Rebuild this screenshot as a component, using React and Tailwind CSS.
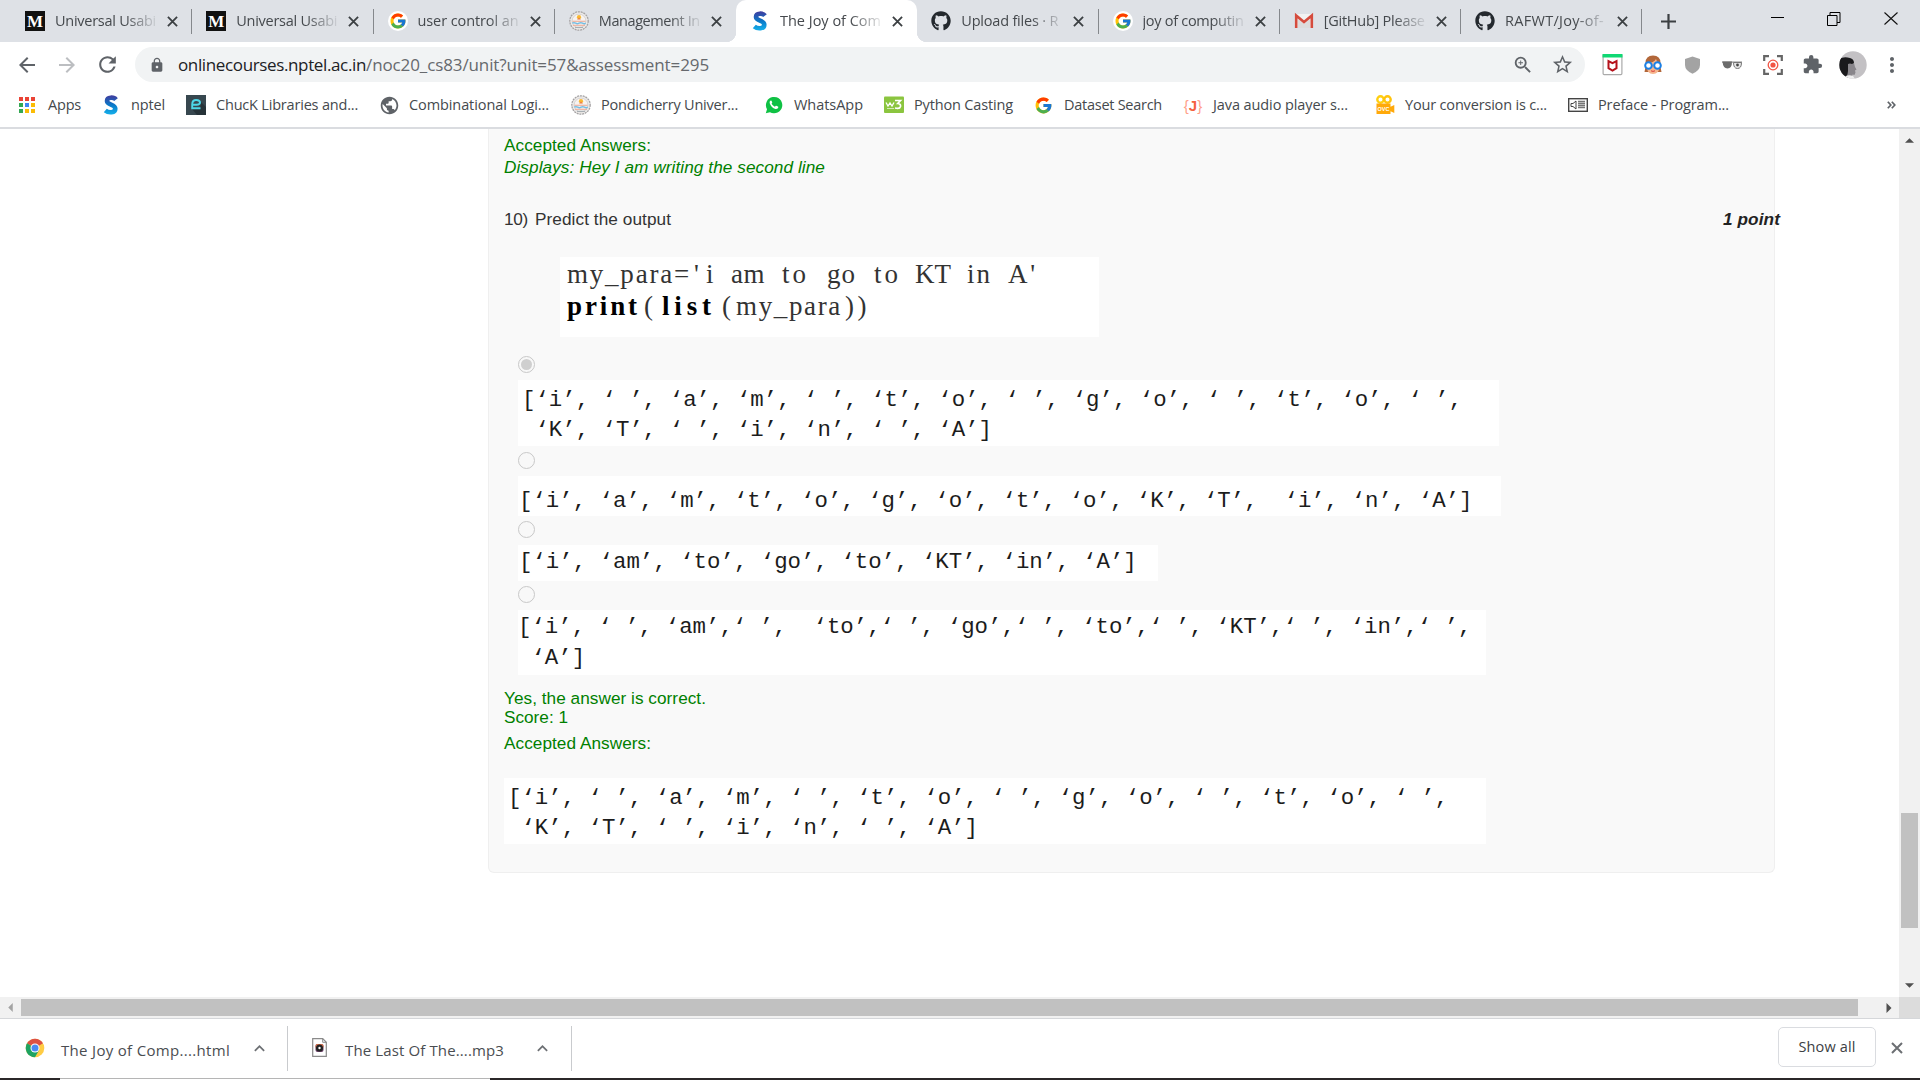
import React, { useLayoutEffect, useRef, useState } from "react";
import { FcGoogle } from "react-icons/fc";
import { FaGithub } from "react-icons/fa";
import {
  MdArrowBack, MdArrowForward, MdRefresh, MdLock, MdZoomIn, MdStarBorder,
  MdExtension, MdMoreVert, MdPublic, MdKeyboardArrowUp,
} from "react-icons/md";

/* One line of text whose tracking is adjusted so that it fills `w` pixels. */
function Fit({ w, children, className = "" }) {
  const ref = useRef(null);
  const [ls, setLs] = useState(0);
  useLayoutEffect(() => {
    const n = ref.current.getBoundingClientRect().width;
    setLs((w - n) / children.length);
  }, []);
  return (
    <span ref={ref} className={"inline-block shrink-0 whitespace-pre " + className} style={{ letterSpacing: ls + "px" }}>
      {children}
    </span>
  );
}

const Line = ({ className = "", ...rest }) => (
  <div className={"flex " + className}><Fit {...rest} /></div>
);

const Cross = ({ className, width }) => (
  <svg className={"shrink-0 " + className} viewBox="0 0 12 12" fill="none" stroke="currentColor" strokeWidth={width}>
    <path d="m1 1 10 10M11 1 1 11" />
  </svg>
);

const MediumIcon = () => (
  <span className="flex h-5 w-5 items-center justify-center bg-[#111] font-['Liberation_Serif',serif] text-[17px] font-bold leading-none text-white">M</span>
);
const GoogleTab = () => (
  <span className="flex h-5 w-5 items-center justify-center rounded-full bg-white"><FcGoogle size={18} /></span>
);
const Crest = () => (
  <svg className="h-5 w-5" viewBox="0 0 20 20">
    <circle cx="10" cy="10" r="9.2" fill="#eceae8" stroke="#a5a3a4" strokeWidth="1.3" strokeDasharray="2 0.8" />
    <circle cx="10" cy="10" r="6.9" fill="#f7f3f0" stroke="#c5c1c2" strokeWidth="0.6" />
    <circle cx="10" cy="6.2" r="2.1" fill="#f9b932" />
    <path d="M8 8.4 10 6.5l2 1.9z" fill="#ef7d45" />
    <path d="M3.5 10.3h13M4 14.2h12" stroke="#eba58f" strokeWidth="1.1" />
    <path d="M3.3 12.2q1.7-1 3.4 0t3.4 0 3.4 0 3.2 0" fill="none" stroke="#74bde3" strokeWidth="1.5" />
    <path d="M6 16.3h8" stroke="#9aa4ab" strokeWidth="1" />
  </svg>
);
const Swayam = () => (
  <svg className="h-5 w-5" viewBox="0 0 20 20">
    <defs>
      <linearGradient id="sg" x1="0" y1="0" x2="0" y2="20" gradientUnits="userSpaceOnUse">
        <stop offset="0.05" stopColor="#3e3fa0" /><stop offset="0.5" stopColor="#0a78c8" /><stop offset="0.9" stopColor="#13a9e6" />
      </linearGradient>
    </defs>
    <path d="M15 4.600C13 2 6 1.600 6 6c0 4 8.300 3.300 8.300 7.700 0 4.300-6.700 4.600-10 1.700" fill="none" stroke="url(#sg)" strokeWidth="4.600" />
  </svg>
);
const AppsIcon = () => (
  <span className="grid w-4 grid-cols-3 gap-[2px]">
    <i className="h-1 w-1 bg-[#ea4335]" /><i className="h-1 w-1 bg-[#ea4335]" /><i className="h-1 w-1 bg-[#ea4335]" />
    <i className="h-1 w-1 bg-[#34a853]" /><i className="h-1 w-1 bg-[#4285f4]" /><i className="h-1 w-1 bg-[#fbbc05]" />
    <i className="h-1 w-1 bg-[#34a853]" /><i className="h-1 w-1 bg-[#fbbc05]" /><i className="h-1 w-1 bg-[#fbbc05]" />
  </span>
);
const ChuckIcon = () => (
  <svg className="h-5 w-5" viewBox="0 0 20 20">
    <path d="M0 0h20v20H0z" fill="#37474f" />
    <path d="M6 14h8l1-7 5 5v8h-9z" fill="#263238" />
    <path d="M14.500 13.200H6.200V9.500q0-4.500 4-4.500 3.800 0 3.800 2.600 0 2.200-3.600 2.200H6.200" fill="none" stroke="#4dd6e8" strokeWidth="1.900" />
  </svg>
);
const WhatsApp = () => (
  <svg className="h-5 w-5" viewBox="0 0 20 20">
    <path d="M1.8 18.3 3 14.2A8.2 8.2 0 1 1 6 17.2z" fill="#0fc144" />
    <path d="M7 5.6c-.9.2-1.7 1.2-1.2 2.8.8 2.600 3 4.900 5.700 5.500 1.400.3 2.600-.4 2.800-1.600.1-.5 0-.6-.4-.8l-1.600-.8c-.3-.1-.5 0-.7.200l-.7.8c-1.600-.6-2.700-1.700-3.300-3.100l.6-.8c.1-.2.1-.4 0-.6l-.7-1.500z" fill="#fff" />
  </svg>
);
const W3 = () => (
  <svg className="h-5 w-5" viewBox="0 0 20 20">
    <rect y="1.500" width="20" height="16.500" rx="1" fill="#8bc53f" />
    <path d="M2 7.500 4 11 6 8l2 3L10 7.500" fill="none" stroke="#fff" strokeWidth="1.300" />
    <path d="M11 5.500h5.500l-2.800 3q3.300.3 2.800 3-.8 2.800-5.500 1.500" fill="none" stroke="#fff" strokeWidth="1.700" />
    <path d="M3 13.500h7" stroke="#d4eab4" strokeWidth="1" />
  </svg>
);
const JIcon = () => (
  <span className="flex h-5 w-5 items-center justify-center font-['Liberation_Sans',sans-serif] text-[15px] leading-none text-[#ff9f8a]">
    {"{"}<b className="text-[15px] text-[#f4623f]">J</b>{"}"}
  </span>
);
const Ovc = () => (
  <svg className="h-5 w-5" viewBox="0 0 20 20">
    <circle cx="5.500" cy="4.500" r="3.200" fill="none" stroke="#ffcf10" strokeWidth="2.400" />
    <circle cx="12.500" cy="4.500" r="3.200" fill="none" stroke="#ffc30d" strokeWidth="2.400" />
    <path d="M1.500 8.500h14v3.200l3.800-1.700v8l-3.800-1.700V19h-14z" fill="#ffa90a" />
    <text x="2.500" y="16" fontSize="5.500" fontWeight="bold" fill="#fff" fontFamily="Liberation Sans">OVC</text>
  </svg>
);
const Preface = () => (
  <svg className="h-5 w-5" viewBox="0 0 20 20">
    <rect x="0.700" y="3.700" width="18.600" height="12.600" fill="#fff" stroke="#444" strokeWidth="1.400" />
    <path d="M3 8.500h2L8 6v8l-3-2.500H3z" fill="none" stroke="#444" />
    <path d="M10 6.500h7M10 8.500h7M10 10.500h7M10 12.500h7" stroke="#777" strokeWidth="1.300" />
  </svg>
);

const tabs = [
  { icon: <MediumIcon />, t: "Universal Usabi", w: 101, sep: true },
  { icon: <MediumIcon />, t: "Universal Usabi", w: 101, sep: true },
  { icon: <GoogleTab />, t: "user control an", w: 101, sep: true },
  { icon: <Crest />, t: "Management In", w: 101 },
  { icon: <Swayam />, t: "The Joy of Com", w: 101, active: true },
  { icon: <FaGithub size={20} className="text-[#24292e]" />, t: "Upload files · R", w: 97, sep: true },
  { icon: <GoogleTab />, t: "joy of computin", w: 101, sep: true },
  {
    icon: (
      <svg className="h-5 w-5" viewBox="0 0 20 20">
        <path d="M1 3h18v14H1z" fill="#f2f2f2" />
        <path d="m4 8 6 5 6-5v9H4z" fill="#dcdcdc" />
        <path d="M2.200 17V4.500L10 11l7.800-6.500V17" fill="none" stroke="#d54b3d" strokeWidth="2.600" />
      </svg>
    ),
    t: "[GitHub] Please", w: 101, sep: true,
  },
  { icon: <FaGithub size={20} className="text-[#24292e]" />, t: "RAFWT/Joy-of-", w: 99, sep: true },
];

const bookmarks = [
  { x: "w-[29px]", m: "ml-[19px]", icon: <AppsIcon />, t: "Apps", w: 33 },
  { x: "w-[30px]", m: "ml-[20px]", icon: <Swayam />, t: "nptel", w: 34 },
  { x: "w-[30px]", m: "ml-[21px]", icon: <ChuckIcon />, t: "ChucK Libraries and...", w: 142 },
  { x: "w-[30px]", m: "ml-[21px]", icon: <MdPublic size={21} className="text-[#5f6368]" />, t: "Combinational Logi...", w: 140 },
  { x: "w-[30px]", m: "ml-[22px]", icon: <Crest />, t: "Pondicherry Univer...", w: 137 },
  { x: "w-[30px]", m: "ml-[26px]", icon: <WhatsApp />, t: "WhatsApp", w: 69 },
  { x: "w-[30px]", m: "ml-[21px]", icon: <W3 />, t: "Python Casting", w: 99 },
  { x: "w-[30px]", m: "ml-[21px]", icon: <FcGoogle size={19} />, t: "Dataset Search", w: 98 },
  { x: "w-[30px]", m: "ml-[21px]", icon: <JIcon />, t: "Java audio player s...", w: 135 },
  { x: "w-[30px]", m: "ml-[27px]", icon: <Ovc />, t: "Your conversion is c...", w: 142 },
  { x: "w-[30px]", m: "ml-[21px]", icon: <Preface />, t: "Preface - Program...", w: 131 },
];

function TabStrip() {
  return (
    <div className="flex h-[42px] items-stretch bg-[#dee1e6] pl-[11px]">
      {tabs.map((tab, i) => (
        <div
          key={i}
          className={"relative flex w-[181.250px] shrink-0 items-center pl-[14px] " + (tab.active ? "rounded-t-[10px] bg-white" : "")}
        >
          {tab.active && (
            <>
              <span className="absolute -left-[10px] bottom-0 h-[10px] w-[10px] bg-[radial-gradient(circle_at_0_0,#dee1e6_10px,white_10.5px)]" />
              <span className="absolute -right-[10px] bottom-0 h-[10px] w-[10px] bg-[radial-gradient(circle_at_100%_0,#dee1e6_10px,white_10.5px)]" />
            </>
          )}
          <span className="w-[30px] shrink-0">{tab.icon}</span>
          <span className="w-[103px] shrink-0 text-[#45494d] [mask-image:linear-gradient(to_right,black_68%,transparent_102%)]">
            <Fit w={tab.w} className="align-top text-[14.5px] leading-[24px]">{tab.t}</Fit>
          </span>
          <Cross className="ml-[9px] h-[11px] w-[11px] text-[#3c4043]" width={2} />
          {tab.sep && <span className="ml-auto h-[25px] w-px bg-[#85888c]" />}
        </div>
      ))}
      <svg className="ml-[19px] mt-[14px] h-[15px] w-[15px]" viewBox="0 0 15 15" stroke="#3c4043" strokeWidth="2.200">
        <path d="M7.500 0v15M0 7.500h15" />
      </svg>
      <div className="ml-auto mr-[22px] flex items-start">
        <span className="mr-[43px] mt-[17px] h-px w-[13px] bg-black" />
        <svg className="mr-[43px] mt-[12px] h-[14px] w-[14px]" viewBox="0 0 14 14" fill="none" stroke="#000">
          <path d="M.5 3.500h9.500v10H.5zM3 3.500V.5h10v10h-3" />
        </svg>
        <svg className="mt-[12px] h-[13px] w-[14px]" viewBox="0 0 14 13" stroke="#111" strokeWidth="1.100">
          <path d="m.5.5 13 12M13.500.5l-13 12" />
        </svg>
      </div>
    </div>
  );
}

function Extensions() {
  return (
    <div className="flex items-center">
      <svg className="ml-[17px] h-[22px] w-[21px]" viewBox="0 0 20 22">
        <rect x="0.600" y="0.600" width="18.800" height="20" rx="1" fill="#fff" stroke="#aaa" strokeWidth="1.200" />
        <path d="M0 0h20v3.500H0z" fill="#0fd873" />
        <path d="M6 7.200v7l4 2.300 4-2.300v-7l-4 2z" fill="none" stroke="#b5121b" strokeWidth="2" />
      </svg>
      <svg className="ml-[20px] h-5 w-5" viewBox="0 0 20 20">
        <path d="M1.500 17Q2.500 14 2.500 8q0-7.500 7.500-7.500T17.500 8q0 6 1 9z" fill="#b2673a" />
        <path d="M4 8q7 0 9-4 1 3.500 3.500 4v4q-.5 7-6.500 7T4 12z" fill="#f6b58c" />
        <circle cx="5.500" cy="10.500" r="3.300" fill="#fff" stroke="#1a80e6" strokeWidth="2" />
        <circle cx="14.500" cy="10.500" r="3.300" fill="#fff" stroke="#1a80e6" strokeWidth="2" />
        <path d="M8 15.800q2 1.200 4 0" stroke="#d93b3b" fill="none" />
      </svg>
      <svg className="ml-[21px] h-[18px] w-[17px]" viewBox="0 0 17 18">
        <path d="M8.500.500 16 3v6q0 5.500-7.500 8.700Q1 14.500 1 9V3z" fill="#a3a3a3" />
      </svg>
      <svg className="ml-[21px] h-[10px] w-[21px]" viewBox="0 0 21 10">
        <path d="M0 1.500h20v1.200H0z" fill="#8a8a8a" />
        <path d="M.5 1.500h9.500q0 7-4.500 7t-5-7z" fill="#6c6c6c" />
        <path d="M11.500 2.500h8q0 6-4 6t-4-6z" fill="#e4e4e4" stroke="#777" />
        <circle cx="15.500" cy="5" r="1.400" fill="#444" />
      </svg>
      <svg className="ml-[20px] h-5 w-5" viewBox="0 0 20 20" fill="none">
        <path d="M1.200 6V1.200H6M14 1.200h4.800V6M18.800 14v4.800H14M6 18.800H1.200V14" stroke="#666" strokeWidth="2.200" />
        <circle cx="10" cy="10" r="4.800" stroke="#f25545" strokeWidth="1.300" />
        <circle cx="10" cy="10" r="2.600" fill="#f25545" />
      </svg>
      <MdExtension size={21} className="ml-[19px] text-[#5f6368]" />
      <svg className="ml-[16px] h-7 w-7" viewBox="0 0 28 28">
        <defs><clipPath id="av"><circle cx="14" cy="14" r="13.700" /></clipPath></defs>
        <g clipPath="url(#av)">
          <path d="M0 0h28v28H0z" fill="#c3c1c4" />
          <path d="M0 8q5-3 11-1 4 1 4 5l-2 4-1 10H0z" fill="#1a1a1c" />
          <path d="M9 13q2-1 4 0l2-1 1 4 1.500 2.500-1.500 1 .5 2-1 2.500-2-.5-1 3.500H7q2-4 2-7z" fill="#89868b" />
          <path d="M5 26q4-3 9-1l2 3H4z" fill="#efefef" />
        </g>
      </svg>
      <MdMoreVert size={24} className="ml-[13px] text-[#5f6368]" />
    </div>
  );
}

function Toolbar() {
  return (
    <div className="flex h-[45px] items-center bg-white">
      <MdArrowBack size={24} className="ml-[15px] text-[#5f6368]" />
      <MdArrowForward size={24} className="ml-[16px] text-[#bcbec1]" />
      <MdRefresh size={25} className="ml-[16px] text-[#5f6368]" />
      <div className="ml-[15px] flex h-[35px] w-[1450px] items-center rounded-full bg-[#f1f3f4]">
        <MdLock size={16} className="ml-[14px] text-[#5f6368]" />
        <span className="ml-[13px] flex text-[17px] leading-[30px]">
          <Fit w={188} className="text-[#202124]">onlinecourses.nptel.ac.in</Fit>
          <Fit w={343} className="text-[#66696d]">/noc20_cs83/unit?unit=57&assessment=295</Fit>
        </span>
        <MdZoomIn size={22} className="ml-auto text-[#5f6368]" />
        <MdStarBorder size={23} className="ml-[17px] mr-[11px] text-[#5f6368]" />
      </div>
      <Extensions />
    </div>
  );
}

function Bookmarks() {
  return (
    <div className="flex h-[42px] items-center border-b-2 border-[#dadce0] bg-white pb-[4px] text-[14.500px] leading-[24px] text-[#45494d]">
      {bookmarks.map((b) => (
        <div key={b.t} className={"flex shrink-0 items-center " + b.m}>
          <span className={"shrink-0 " + b.x}>{b.icon}</span>
          <Fit w={b.w}>{b.t}</Fit>
        </div>
      ))}
      <svg className="ml-auto mr-[24px] h-2 w-[9px]" viewBox="0 0 9 8" fill="none" stroke="#5f6368" strokeWidth="1.700">
        <path d="m.8.700 3 3.300-3 3.300M4.800.700l3 3.300-3 3.300" />
      </svg>
    </div>
  );
}

function Radio({ on, className }) {
  return (
    <span className={"flex h-[17px] w-[17px] items-center justify-center rounded-full border border-[#c8c8c8] bg-[#f8f8f8] " + className}>
      {on && <span className="h-[11px] w-[11px] rounded-full bg-[#cfcfcf]" />}
    </span>
  );
}

const Mono = ({ children }) => <Line w={children.length * 13.43}>{children}</Line>;

const answerTop = "[‘i’, ‘ ’, ‘a’, ‘m’, ‘ ’, ‘t’, ‘o’, ‘ ’, ‘g’, ‘o’, ‘ ’, ‘t’, ‘o’, ‘ ’,";
const answerBottom = " ‘K’, ‘T’, ‘ ’, ‘i’, ‘n’, ‘ ’, ‘A’]";
const monoBox = "bg-white font-['Liberation_Mono',monospace] text-[22.400px] leading-[30px] text-[#1c1c1c] ";

function Question() {
  return (
    <div className="h-[744px] w-[1287px] rounded-b-[6px] border border-t-0 border-[#efefef] bg-[#f9f9f9] pl-[15px] font-['Liberation_Sans',Arial,sans-serif] text-[17.200px] text-[#333]">
      <div className="pt-[5px] leading-[22px] text-[#008000]">
        <Line w={147}>Accepted Answers:</Line>
        <Line w={321} className="italic">Displays: Hey I am writing the second line</Line>
      </div>
      <div className="-mr-[6px] mt-[30px] flex leading-[22px]">
        <Fit w={24}>10)</Fit>
        <Fit w={136} className="ml-[7px]">Predict the output</Fit>
        <Fit w={57} className="ml-auto font-bold italic text-[#222]">1 point</Fit>
      </div>
      <div className="ml-[56px] mt-[27px] h-[80px] w-[539px] bg-white pl-[7px] pt-[1px] font-['Liberation_Serif',serif] text-[27px] leading-[32px] text-[#333]">
        <div className="flex">
          <Fit w={124}>my_para=</Fit>
          <Fit w={10} className="ml-[3px]">'</Fit>
          <Fit w={10} className="ml-[2px]">i</Fit>
          <Fit w={34} className="ml-[15px]">am</Fit>
          <Fit w={27} className="ml-[17px]">to</Fit>
          <Fit w={29} className="ml-[18px]">go</Fit>
          <Fit w={27} className="ml-[18px]">to</Fit>
          <Fit w={36} className="ml-[14px]">KT</Fit>
          <Fit w={25} className="ml-[16px]">in</Fit>
          <Fit w={30} className="ml-[16px]">A'</Fit>
        </div>
        <div className="flex">
          <Fit w={73} className="font-bold text-black">print</Fit>
          <Fit w={9} className="ml-[4px]">(</Fit>
          <Fit w={54} className="ml-[9px] font-bold text-black">list</Fit>
          <Fit w={9} className="ml-[6px]">(</Fit>
          <Fit w={106} className="ml-[5px]">my_para</Fit>
          <Fit w={25} className="ml-[3px]">))</Fit>
        </div>
      </div>
      <div className="ml-[14px]">
        <Radio on className="mt-[19px]" />
        <div className={monoBox + "mt-[7px] h-[66px] w-[981px] pl-[4px] pt-[5px]"}>
          <Mono>{answerTop}</Mono>
          <Mono>{answerBottom}</Mono>
        </div>
        <Radio className="mt-[6px]" />
        <div className={monoBox + "mt-[7px] h-[40px] w-[983px] pl-[1px] pt-[10px]"}>
          <Mono>{"[‘i’, ‘a’, ‘m’, ‘t’, ‘o’, ‘g’, ‘o’, ‘t’, ‘o’, ‘K’, ‘T’,  ‘i’, ‘n’, ‘A’]"}</Mono>
        </div>
        <Radio className="mt-[5px]" />
        <div className={monoBox + "mt-[7px] h-[36px] w-[640px] pl-[1px] pt-[2px]"}>
          <Mono>{"[‘i’, ‘am’, ‘to’, ‘go’, ‘to’, ‘KT’, ‘in’, ‘A’]"}</Mono>
        </div>
        <Radio className="mt-[5px]" />
        <div className={monoBox + "mt-[7px] h-[65px] w-[968px] pt-[2px]"}>
          <Mono>{"[‘i’, ‘ ’, ‘am’,‘ ’,  ‘to’,‘ ’, ‘go’,‘ ’, ‘to’,‘ ’, ‘KT’,‘ ’, ‘in’,‘ ’,"}</Mono>
          <div className="mt-[1px]"><Mono>{" ‘A’]"}</Mono></div>
        </div>
      </div>
      <div className="mt-[14px] leading-[19px] text-[#008000]">
        <Line w={202}>Yes, the answer is correct.</Line>
        <Line w={64}>Score: 1</Line>
        <div className="mt-[7px]"><Line w={147}>Accepted Answers:</Line></div>
      </div>
      <div className={monoBox + "mt-[25px] h-[66px] w-[982px] pl-[4px] pt-[5px]"}>
        <Mono>{answerTop}</Mono>
        <Mono>{answerBottom}</Mono>
      </div>
    </div>
  );
}

const Arrow = ({ d, fill, className }) => (
  <svg className={"shrink-0 " + className} viewBox="0 0 10 10"><path d={d} fill={fill} /></svg>
);

export default function App() {
  return (
    <div className="flex h-[1080px] w-[1920px] flex-col overflow-hidden bg-white font-['Open_Sans','Noto_Sans',sans-serif]">
      <TabStrip />
      <Toolbar />
      <Bookmarks />
      <div className="flex h-[868px]">
        <div className="w-[1899px] overflow-hidden pl-[488px]">
          <Question />
        </div>
        <div className="flex w-[21px] flex-col items-center bg-[#f1f1f1]">
          <Arrow d="M0 7.500 5 2.500l5 5z" fill="#505050" className="mt-[7px] h-[9px] w-[9px]" />
          <div className="mt-[668px] h-[115px] w-[17px] bg-[#c1c1c1]" />
          <Arrow d="M0 2.500h10l-5 5z" fill="#505050" className="mt-[53px] h-[9px] w-[9px]" />
        </div>
      </div>
      <div className="flex h-[21px] items-center bg-[#f1f1f1]">
        <Arrow d="M7.500 0v10l-5-5z" fill="#a3a3a3" className="ml-[6px] h-[9px] w-[9px]" />
        <div className="ml-[6px] h-[17px] w-[1837px] bg-[#c1c1c1]" />
        <Arrow d="M2.500 0v10l5-5z" fill="#505050" className="ml-[26px] h-[10px] w-[10px]" />
        <div className="ml-auto h-[21px] w-[21px] bg-[#dcdcdc]" />
      </div>
      <div className="flex h-[60px] items-center border-t border-[#d5d7da] bg-white text-[15px] leading-[24px] text-[#4a4d51]">
        <svg className="mb-[2px] ml-[25px] h-5 w-5" viewBox="0 0 20 20">
          <circle cx="10" cy="10" r="9.300" fill="#fc4" />
          <path d="M10 10 1.950 5.350A9.300 9.300 0 0 1 18.050 5.350z" fill="#dd5144" />
          <path d="M1.950 5.350A9.300 9.300 0 0 0 10 19.300L14 12.300 10 10z" fill="#1da362" />
          <circle cx="10" cy="10" r="4.500" fill="#fff" />
          <circle cx="10" cy="10" r="3.500" fill="#4a8af4" />
        </svg>
        <span className="ml-[16px] mt-[2px] flex"><Fit w={169}>The Joy of Comp....html</Fit></span>
        <MdKeyboardArrowUp size={21} className="ml-[19px] text-[#6c6f73]" />
        <span className="ml-[17px] h-[45px] w-px bg-[#c9cbce]" />
        <svg className="mb-[2px] ml-[24px] h-[19px] w-[15px]" viewBox="0 0 15 19">
          <path d="M.7.700h10L14.300 4.300V18.300H.7z" fill="#fff" stroke="#8a8a8a" strokeWidth="1.200" />
          <path d="M10.700.700V4.300h3.600" fill="none" stroke="#8a8a8a" />
          <rect x="3.500" y="6" width="8" height="8" rx="2" fill="#6b4268" />
          <path d="M3.500 9.500V8q0-2 2-2h4q2 0 2 2v1.500z" fill="#d9714a" />
          <circle cx="7.500" cy="10" r="3.500" fill="#222" />
          <circle cx="7.500" cy="10" r="1.200" fill="#fff" />
        </svg>
        <span className="ml-[18px] mt-[2px] flex"><Fit w={159}>The Last Of The....mp3</Fit></span>
        <MdKeyboardArrowUp size={21} className="ml-[28px] text-[#6c6f73]" />
        <span className="ml-[18px] h-[45px] w-px bg-[#c9cbce]" />
        <div className="mb-[3px] ml-auto flex h-[40px] w-[98px] items-center justify-center rounded-[5px] border border-[#dadce0] text-[14.500px] font-medium text-[#3c4043]">
          <Fit w={57}>Show all</Fit>
        </div>
        <Cross className="mb-[2px] ml-[15px] mr-[17px] h-3 w-3 text-[#6c6f73]" width={2} />
      </div>
      <div className="flex h-[2px] bg-[#2b2829]">
        <div className="ml-[60px] h-[2px] w-[430px] bg-white"><div className="h-px bg-[#b5b5b5]" /></div>
      </div>
    </div>
  );
}
